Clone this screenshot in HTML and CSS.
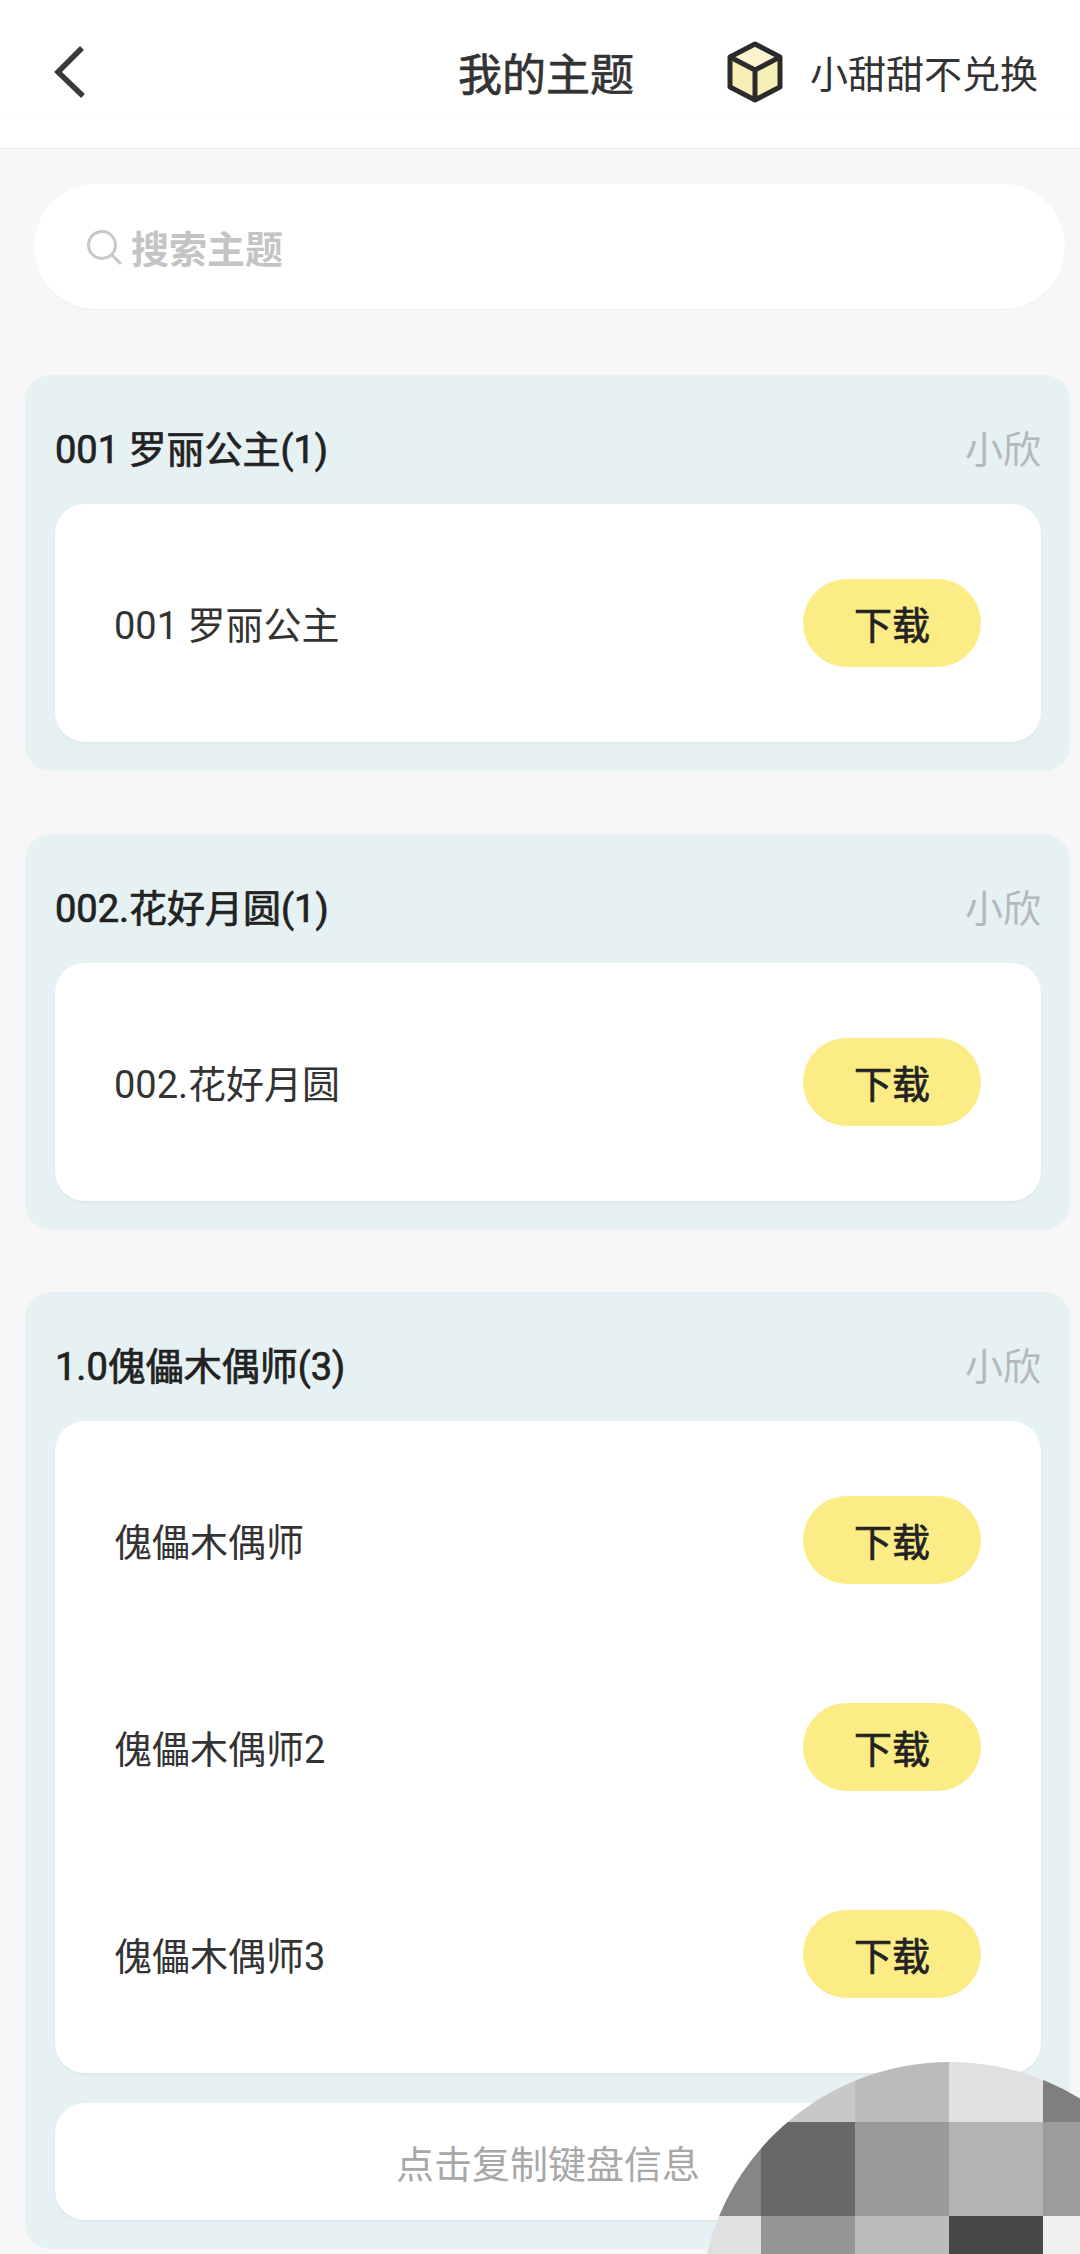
FILE: index.html
```html
<!DOCTYPE html>
<html lang="zh-CN">
<head>
  <meta charset="UTF-8">
  <meta name="viewport" content="width=device-width, initial-scale=1.0">
  <title>我的主题</title>
  <link rel="stylesheet" href="styles.css">
</head>
<body>
  <!-- Top bar -->
  <header class="topbar">
    <div class="topbar-row">
      <svg class="back-icon" width="40" height="84" viewBox="0 0 40 84">
        <path d="M32 18 L8 42 L33 66" fill="none" stroke="#3a3a3a" stroke-width="5.5"/>
      </svg>
      <h1 class="page-title">我的主题</h1>
      <svg class="cube-icon" width="58" height="62" viewBox="0 0 58 62">
        <path d="M29 3 L54 16 V46 L29 59 L4 46 V16 Z" fill="#f8eeb8"/>
        <path d="M29 3 L54 16 L29 29 L4 16 Z" fill="#fbf4cf"/>
        <path d="M29 3 L54 16 V46 L29 59 L4 46 V16 Z M4 16 L29 29 L54 16 M29 29 V59" fill="none" stroke="#2b2b2b" stroke-width="5" stroke-linejoin="round"/>
      </svg>
      <span class="exchange-text">小甜甜不兑换</span>
    </div>
  </header>

  <!-- Search -->
  <div class="search-box">
    <svg class="search-icon" width="36" height="36" viewBox="0 0 36 36">
      <circle cx="16" cy="16" r="13.5" fill="none" stroke="#c8c8c8" stroke-width="3"/>
      <path d="M26 26 L35 35" fill="none" stroke="#c8c8c8" stroke-width="3"/>
    </svg>
    <span class="search-text">搜索主题</span>
  </div>

  <!-- Theme groups -->
  <section class="group">
    <div class="group-head">
      <span class="group-name">001 罗丽公主(1)</span>
      <span class="group-author">小欣</span>
    </div>
    <div class="panel">
      <div class="row">
        <span class="row-name">001 罗丽公主</span>
        <button class="download">下载</button>
      </div>
    </div>
  </section>

  <section class="group">
    <div class="group-head">
      <span class="group-name">002.花好月圆(1)</span>
      <span class="group-author">小欣</span>
    </div>
    <div class="panel">
      <div class="row">
        <span class="row-name">002.花好月圆</span>
        <button class="download">下载</button>
      </div>
    </div>
  </section>

  <section class="group group-last">
    <div class="group-head">
      <span class="group-name">1.0傀儡木偶师(3)</span>
      <span class="group-author">小欣</span>
    </div>
    <div class="panel">
      <div class="row">
        <span class="row-name">傀儡木偶师</span>
        <button class="download">下载</button>
      </div>
      <div class="row">
        <span class="row-name">傀儡木偶师2</span>
        <button class="download">下载</button>
      </div>
      <div class="row">
        <span class="row-name">傀儡木偶师3</span>
        <button class="download">下载</button>
      </div>
    </div>
    <div class="copy-info">点击复制键盘信息</div>
  </section>

  <!-- Pixelated circle over the corner -->
  <div class="mosaic-clip">
    <div class="mosaic">
      <div class="mosaic-grid">
        <i class="m-c8"></i><i class="m-c8"></i><i class="m-bb"></i><i class="m-e0"></i><i class="m-7f"></i>
        <i class="m-86"></i><i class="m-68"></i><i class="m-9a"></i><i class="m-b3"></i><i class="m-9c"></i>
        <i class="m-e0"></i><i class="m-95"></i><i class="m-bb"></i><i class="m-48"></i><i class="m-f0"></i>
      </div>
    </div>
  </div>
</body>
</html>
```

FILE: styles.css
```css
html, body {
  height: 2254px;
  overflow: hidden;
}

body {
  position: relative;
  margin: 0;
  padding: 0;
  background-color: #f7f7f7;
  font-family: Roboto, "Noto Sans CJK SC", sans-serif;
  font-size: 38px;
  color: #2e2e2e;
}

.topbar {
  height: 148px;
  background: #fff;
  border-bottom: 1px solid #ececec;
}

.topbar-row {
  display: flex;
  align-items: center;
  box-sizing: border-box;
  height: 120px;
  padding: 24px 0 0 50px;
  border-bottom: 1px solid #fafafa;
}

.page-title {
  margin: 0 0 0 368px;
  font-size: 44px;
  font-weight: 400;
  -webkit-text-stroke: 0.7px #333;
  color: #333;
}

.cube-icon {
  margin-left: 92px;
}

.exchange-text {
  margin-left: 26px;
  color: #333;
}

.search-box {
  display: flex;
  align-items: center;
  height: 125px;
  margin: 35px 15px 0 34px;
  padding-left: 52px;
  background: #fff;
  border-radius: 62px;
  box-shadow: 0 1px 2px rgba(0, 0, 0, 0.03);
}

.search-text {
  margin-left: 9px;
  font-weight: 700;
  color: #c4c4c4;
}

.search-icon {
  flex: none;
}

.group {
  margin: 63px 10px 0 25px;
  padding: 0 29px 29px 30px;
  background: #e6f1f3;
  border-radius: 26px;
}

.search-box + .group {
  margin-top: 66px;
}

.group-last {
  margin-top: 62px;
}

.group-head {
  display: flex;
  justify-content: space-between;
  align-items: center;
  box-sizing: border-box;
  height: 129px;
  padding: 33px 0 19px;
}

.group-name {
  font-weight: 400;
  -webkit-text-stroke: 0.7px #222;
  color: #222;
}

.group-author {
  color: #b4b8b9;
}

.panel {
  padding: 15px 0 16px;
  background: #fff;
  border-radius: 30px;
  box-shadow: 0 2px 3px rgba(0, 0, 0, 0.04);
}

.row {
  display: flex;
  justify-content: space-between;
  align-items: center;
  height: 207px;
  padding: 0 60px 0 59px;
}

.row-name {
  color: #333;
}

.download {
  width: 178px;
  height: 88px;
  padding: 0;
  border: none;
  border-radius: 44px;
  background: #fcec85;
  font-family: inherit;
  font-size: 38px;
  font-weight: 400;
  -webkit-text-stroke: 0.7px #222;
  color: #222;
}

.copy-info {
  display: flex;
  justify-content: center;
  align-items: center;
  height: 117px;
  margin-top: 30px;
  background: #fff;
  border-radius: 30px;
  box-shadow: 0 2px 3px rgba(0, 0, 0, 0.04);
  color: #a8a8a8;
}

.mosaic-clip {
  position: absolute;
  left: 700px;
  top: 2062px;
  width: 380px;
  height: 192px;
  overflow: hidden;
}

.mosaic {
  width: 500px;
  height: 500px;
  border-radius: 50%;
  overflow: hidden;
}

.mosaic-grid {
  display: grid;
  grid-template-columns: repeat(5, 94px);
  grid-auto-rows: 94px;
  margin: -34px 0 0 -33px;
}

.mosaic-grid i {
  display: block;
}

.m-c8 { background: #c8c8c8; }
.m-bb { background: #bbb; }
.m-e0 { background: #e0e0e0; }
.m-7f { background: #7f7f7f; }
.m-86 { background: #868686; }
.m-68 { background: #686868; }
.m-9a { background: #9a9a9a; }
.m-b3 { background: #b3b3b3; }
.m-9c { background: #9c9c9c; }
.m-95 { background: #959595; }
.m-48 { background: #484848; }
.m-f0 { background: #f0f0f0; }
```
